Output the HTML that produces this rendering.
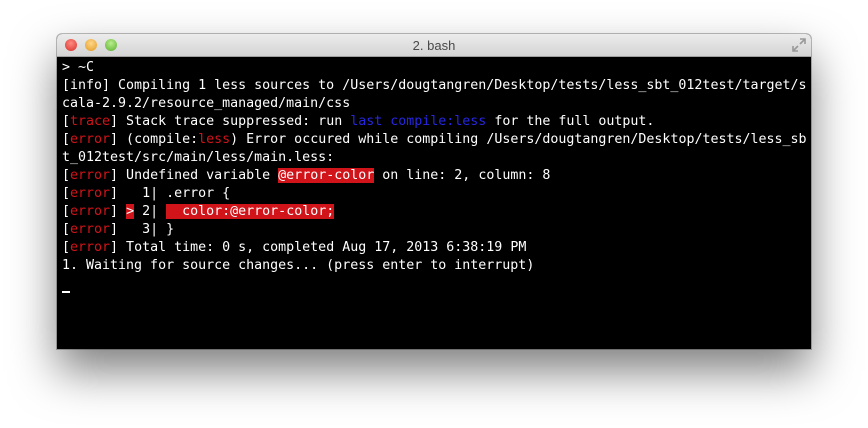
<!DOCTYPE html><html><head><style>
body{margin:0;width:868px;height:428px;background:#fff;overflow:hidden;position:relative}
.win{position:absolute;left:57px;top:34px;width:754px;height:315px;background:#000;border-radius:5px 5px 0 0;box-shadow:0 22px 45px rgba(0,0,0,.5),0 0 0 1px rgba(0,0,0,.25);overflow:hidden}
.tb{height:22px;background:linear-gradient(#ececec,#d4d4d4);border-bottom:1px solid #a0a0a0;position:relative;font:13px "Liberation Sans",sans-serif;color:#4a4a4a;text-align:center;line-height:23px}
.d{position:absolute;top:5px;width:12px;height:12px;border-radius:50%}
pre{margin:0;padding:2px 0 0 5px;font:13.3px/18px "DejaVu Sans Mono",monospace;color:#fff}
.r{color:#d0141a}.b{color:#2626e0}.h{background:#d0141a}
</style></head><body>
<div class="win"><div class="tb">
<div class="d" style="left:8px;background:radial-gradient(circle at 50% 35%,#ff8a80,#d6302a)"></div>
<div class="d" style="left:28px;background:radial-gradient(circle at 50% 35%,#ffd68a,#e09a20)"></div>
<div class="d" style="left:48px;background:radial-gradient(circle at 50% 35%,#b8ee8a,#5aae30)"></div>
2. bash
<svg style="position:absolute;right:5px;top:4px" width="14" height="14" viewBox="0 0 14 14"><path d="M8 1h5v5M13 1L8 6M6 13H1V8M1 13l5-5" stroke="#999" stroke-width="1.6" fill="none"/></svg>
</div>
<pre>&gt; ~C
[info] Compiling 1 less sources to /Users/dougtangren/Desktop/tests/less_sbt_012test/target/s
cala-2.9.2/resource_managed/main/css
[<span class="r">trace</span>] Stack trace suppressed: run <span class="b">last compile:less</span> for the full output.
[<span class="r">error</span>] (compile:<span class="r">less</span>) Error occured while compiling /Users/dougtangren/Desktop/tests/less_sb
t_012test/src/main/less/main.less:
[<span class="r">error</span>] Undefined variable <span class="h">@error-color</span> on line: 2, column: 8
[<span class="r">error</span>]   1| .error {
[<span class="r">error</span>] <span class="h">&gt;</span> 2| <span class="h">  color:@error-color;</span>
[<span class="r">error</span>]   3| }
[<span class="r">error</span>] Total time: 0 s, completed Aug 17, 2013 6:38:19 PM
1. Waiting for source changes... (press enter to interrupt)</pre>
<div style="position:absolute;left:5px;top:257px;width:8px;height:2px;background:#fff"></div>
</div>
</body></html>
